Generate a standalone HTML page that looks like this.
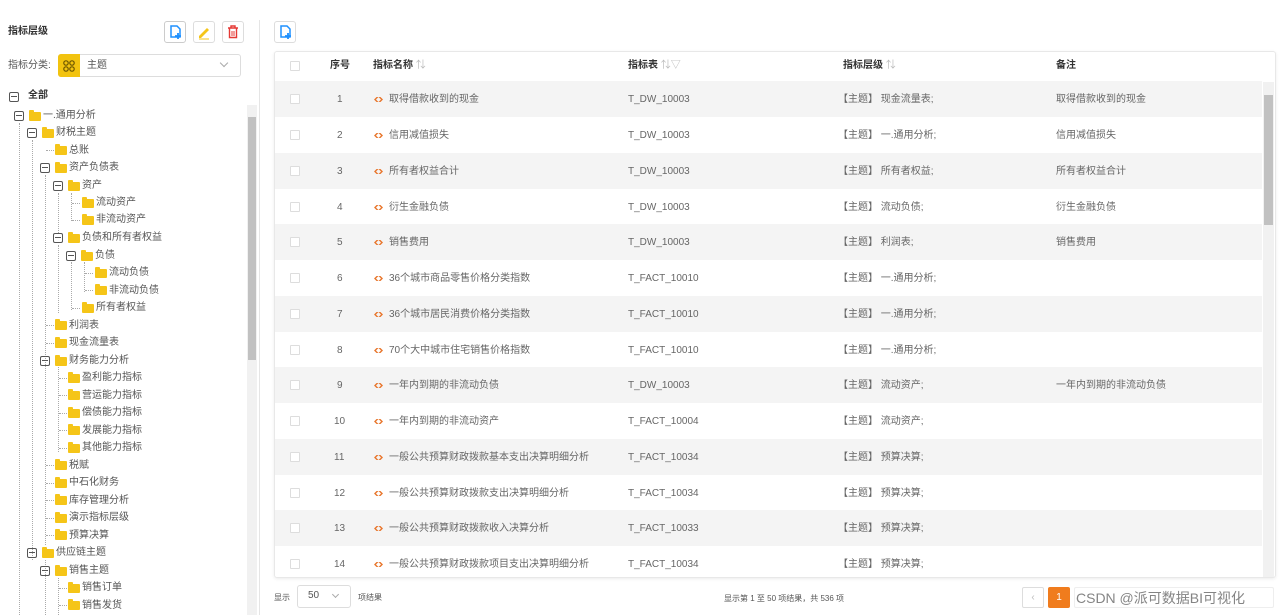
<!DOCTYPE html>
<html><head><meta charset="utf-8"><style>
*{box-sizing:border-box;margin:0;padding:0}
body{width:1280px;height:615px;overflow:hidden;background:#fff;font-family:"Liberation Sans","Noto Sans CJK SC",sans-serif;font-size:10px;line-height:14px;color:#555;position:relative}
.a{position:absolute;white-space:nowrap;line-height:14px}
.btn{position:absolute;width:22px;height:22px;border:1px solid #ddd;border-radius:3px;background:#fff}
.t{position:absolute;white-space:nowrap;font-size:10px;color:#555;line-height:14px}
.tg{position:absolute;width:10px;height:10px;border:1.3px solid #555;border-radius:2px}
.tg:after{content:"";position:absolute;left:1px;right:1px;top:3px;height:1.3px;background:#555}
.fd{position:absolute;width:12px;height:9px;background:#f5c518;border-radius:1px}
.fd:before{content:"";position:absolute;left:0;top:-2px;width:5px;height:3px;background:#f5c518;border-radius:1px 1px 0 0}
.vl{position:absolute;border-left:1px dotted #aaa}
.hl{position:absolute;border-top:1px dotted #aaa;width:8px}
.row{position:absolute;left:275px;width:987px;height:36px}
.row.g{background:#f4f4f4}
.cb{position:absolute;left:15px;top:13px;width:10px;height:10px;border:1px solid #ddd;background:#fff;border-radius:1px}
.c{position:absolute;top:12px;font-size:10px;color:#666;white-space:nowrap;line-height:14px;height:14px}
.ic{position:absolute;left:98px;top:14px;width:11px;height:9px}
</style></head><body>
<div class="a" style="left:8px;top:25px;font-weight:bold;font-size:10px;color:#333">指标层级</div>
<div class="btn" style="left:164px;top:21px;border-color:#ccc"><svg width="20" height="20" viewBox="0 0 20 20"><path d="M6 4h6l3 3v8H6z" fill="none" stroke="#1e90ff" stroke-width="1.5"/><path d="M13 11v6M10 14h6" stroke="#1e90ff" stroke-width="1.8"/></svg></div>
<div class="btn" style="left:193px;top:21px"><svg width="20" height="20" viewBox="0 0 20 20"><path d="M5 14l8-8 2 2-8 8H5z" fill="#f5c518"/><path d="M5 17h10" stroke="#f5c518"/></svg></div>
<div class="btn" style="left:222px;top:21px"><svg width="20" height="20" viewBox="0 0 20 20"><path d="M5 6h10M8 6V4h4v2M6.5 6.5v9h7v-9" fill="none" stroke="#e53935" stroke-width="1.4"/><path d="M9 9v5M11 9v5" stroke="#e53935"/></svg></div>
<div class="a" style="left:8px;top:59px;color:#555">指标分类:</div>
<div class="a" style="left:58px;top:54px;width:183px;height:23px;border:1px solid #ddd;border-radius:3px"></div>
<div class="a" style="left:58px;top:54px;width:22px;height:23px;background:#f2c30f;border-radius:3px 0 0 3px"><svg width="22" height="23"><g fill="none" stroke="#6b5500" stroke-width="1.2"><circle cx="8" cy="9" r="2.2"/><circle cx="14" cy="9" r="2.2"/><circle cx="8" cy="15" r="2.2"/><circle cx="14" cy="15" r="2.2"/></g></svg></div>
<div class="a" style="left:87px;top:59px;color:#555">主题</div>
<div class="a" style="left:221px;top:60px;width:6px;height:6px;border-right:1px solid #aaa;border-bottom:1px solid #aaa;transform:rotate(45deg)"></div>
<div class="a" style="left:259px;top:20px;height:595px;border-left:1px solid #e5e5e5"></div>
<div class="a" style="left:247px;top:105px;width:10px;height:510px;background:#f1f1f1"></div>
<div class="a" style="left:248px;top:117px;width:8px;height:243px;background:#c1c1c1"></div>

<div class="tg" style="left:9px;top:92px"></div><div class="t" style="left:28px;top:89px;font-weight:bold;color:#333">全部</div>
<div class="vl" style="left:19px;top:123px;height:492px"></div>
<div class="vl" style="left:32px;top:140px;height:420px"></div>
<div class="vl" style="left:45px;top:175px;height:370px"></div>
<div class="vl" style="left:58px;top:193px;height:40px"></div>
<div class="vl" style="left:58px;top:245px;height:68px"></div>
<div class="vl" style="left:71px;top:193px;height:28px"></div>
<div class="vl" style="left:71px;top:262px;height:48px"></div>
<div class="vl" style="left:84px;top:262px;height:30px"></div>
<div class="vl" style="left:58px;top:367px;height:85px"></div>
<div class="vl" style="left:45px;top:560px;height:55px"></div>
<div class="vl" style="left:58px;top:578px;height:37px"></div>

<div class="tg" style="left:14px;top:111px"></div><div class="fd" style="left:29px;top:112px"></div><div class="t" style="left:43px;top:109px">一.通用分析</div>
<div class="tg" style="left:27px;top:128px"></div><div class="fd" style="left:42px;top:129px"></div><div class="t" style="left:56px;top:126px">财税主题</div>
<div class="hl" style="left:46px;top:150px"></div><div class="fd" style="left:55px;top:146px"></div><div class="t" style="left:69px;top:144px">总账</div>
<div class="tg" style="left:40px;top:163px"></div><div class="fd" style="left:55px;top:164px"></div><div class="t" style="left:69px;top:161px">资产负债表</div>
<div class="tg" style="left:53px;top:181px"></div><div class="fd" style="left:68px;top:182px"></div><div class="t" style="left:82px;top:179px">资产</div>
<div class="hl" style="left:72px;top:203px"></div><div class="fd" style="left:82px;top:199px"></div><div class="t" style="left:96px;top:196px">流动资产</div>
<div class="hl" style="left:72px;top:220px"></div><div class="fd" style="left:82px;top:216px"></div><div class="t" style="left:96px;top:213px">非流动资产</div>
<div class="tg" style="left:53px;top:233px"></div><div class="fd" style="left:68px;top:234px"></div><div class="t" style="left:82px;top:231px">负债和所有者权益</div>
<div class="tg" style="left:66px;top:251px"></div><div class="fd" style="left:81px;top:252px"></div><div class="t" style="left:95px;top:249px">负债</div>
<div class="hl" style="left:85px;top:273px"></div><div class="fd" style="left:95px;top:269px"></div><div class="t" style="left:109px;top:266px">流动负债</div>
<div class="hl" style="left:85px;top:290px"></div><div class="fd" style="left:95px;top:286px"></div><div class="t" style="left:109px;top:284px">非流动负债</div>
<div class="hl" style="left:72px;top:308px"></div><div class="fd" style="left:82px;top:304px"></div><div class="t" style="left:96px;top:301px">所有者权益</div>
<div class="hl" style="left:46px;top:325px"></div><div class="fd" style="left:55px;top:321px"></div><div class="t" style="left:69px;top:319px">利润表</div>
<div class="hl" style="left:46px;top:343px"></div><div class="fd" style="left:55px;top:339px"></div><div class="t" style="left:69px;top:336px">现金流量表</div>
<div class="tg" style="left:40px;top:356px"></div><div class="fd" style="left:55px;top:357px"></div><div class="t" style="left:69px;top:354px">财务能力分析</div>
<div class="hl" style="left:59px;top:378px"></div><div class="fd" style="left:68px;top:374px"></div><div class="t" style="left:82px;top:371px">盈利能力指标</div>
<div class="hl" style="left:59px;top:395px"></div><div class="fd" style="left:68px;top:391px"></div><div class="t" style="left:82px;top:389px">营运能力指标</div>
<div class="hl" style="left:59px;top:413px"></div><div class="fd" style="left:68px;top:409px"></div><div class="t" style="left:82px;top:406px">偿债能力指标</div>
<div class="hl" style="left:59px;top:430px"></div><div class="fd" style="left:68px;top:426px"></div><div class="t" style="left:82px;top:424px">发展能力指标</div>
<div class="hl" style="left:59px;top:448px"></div><div class="fd" style="left:68px;top:444px"></div><div class="t" style="left:82px;top:441px">其他能力指标</div>
<div class="hl" style="left:46px;top:465px"></div><div class="fd" style="left:55px;top:461px"></div><div class="t" style="left:69px;top:459px">税赋</div>
<div class="hl" style="left:46px;top:483px"></div><div class="fd" style="left:55px;top:479px"></div><div class="t" style="left:69px;top:476px">中石化财务</div>
<div class="hl" style="left:46px;top:500px"></div><div class="fd" style="left:55px;top:496px"></div><div class="t" style="left:69px;top:494px">库存管理分析</div>
<div class="hl" style="left:46px;top:518px"></div><div class="fd" style="left:55px;top:514px"></div><div class="t" style="left:69px;top:511px">演示指标层级</div>
<div class="hl" style="left:46px;top:535px"></div><div class="fd" style="left:55px;top:531px"></div><div class="t" style="left:69px;top:529px">预算决算</div>
<div class="tg" style="left:27px;top:548px"></div><div class="fd" style="left:42px;top:549px"></div><div class="t" style="left:56px;top:546px">供应链主题</div>
<div class="tg" style="left:40px;top:566px"></div><div class="fd" style="left:55px;top:567px"></div><div class="t" style="left:69px;top:564px">销售主题</div>
<div class="hl" style="left:59px;top:588px"></div><div class="fd" style="left:68px;top:584px"></div><div class="t" style="left:82px;top:581px">销售订单</div>
<div class="hl" style="left:59px;top:605px"></div><div class="fd" style="left:68px;top:601px"></div><div class="t" style="left:82px;top:599px">销售发货</div>

<div class="btn" style="left:274px;top:21px"><svg width="20" height="20" viewBox="0 0 20 20"><path d="M6 4h6l3 3v8H6z" fill="none" stroke="#1e90ff" stroke-width="1.5"/><path d="M13 11v6M10 14h6" stroke="#1e90ff" stroke-width="1.8"/></svg></div>
<div class="a" style="left:274px;top:51px;width:1002px;height:527px;border:1px solid #e8e8e8;border-radius:3px;box-shadow:0 1px 3px rgba(0,0,0,.08)"></div>
<div class="a" style="left:290px;top:61px;width:10px;height:10px;border:1px solid #ddd;border-radius:1px"></div>
<div class="a" style="left:330px;top:59px;font-weight:bold;color:#333">序号</div>
<div class="a" style="left:373px;top:59px;font-weight:bold;color:#333">指标名称 <span style="color:#bbb;font-weight:normal">⇅</span></div>
<div class="a" style="left:628px;top:59px;font-weight:bold;color:#333">指标表 <span style="color:#bbb;font-weight:normal">⇅▽</span></div>
<div class="a" style="left:843px;top:59px;font-weight:bold;color:#333">指标层级 <span style="color:#bbb;font-weight:normal">⇅</span></div>
<div class="a" style="left:1056px;top:59px;font-weight:bold;color:#333">备注</div>
<div class="a" style="left:1263px;top:82px;width:11px;height:495px;background:#f1f1f1"></div>
<div class="a" style="left:1264px;top:95px;width:9px;height:130px;background:#c1c1c1"></div>

<svg width="0" height="0" style="position:absolute"><defs><symbol id="lk" viewBox="0 0 11 9"><path d="M1 4.5L3.5 2h2L3 4.5 5.5 7h-2zM10 4.5L7.5 2h-2L8 4.5 5.5 7h2z" fill="#e8772e"/></symbol></defs></svg>

<div class="row g" style="top:81px"><div class="cb"></div><div class="c" style="left:62px">1</div><svg class="ic"><use href="#lk"/></svg><div class="c" style="left:114px">取得借款收到的现金</div><div class="c" style="left:353px">T_DW_10003</div><div class="c" style="left:563px">【主题】 现金流量表;</div><div class="c" style="left:781px">取得借款收到的现金</div></div>
<div class="row" style="top:117px"><div class="cb"></div><div class="c" style="left:62px">2</div><svg class="ic"><use href="#lk"/></svg><div class="c" style="left:114px">信用减值损失</div><div class="c" style="left:353px">T_DW_10003</div><div class="c" style="left:563px">【主题】 一.通用分析;</div><div class="c" style="left:781px">信用减值损失</div></div>
<div class="row g" style="top:153px"><div class="cb"></div><div class="c" style="left:62px">3</div><svg class="ic"><use href="#lk"/></svg><div class="c" style="left:114px">所有者权益合计</div><div class="c" style="left:353px">T_DW_10003</div><div class="c" style="left:563px">【主题】 所有者权益;</div><div class="c" style="left:781px">所有者权益合计</div></div>
<div class="row" style="top:189px"><div class="cb"></div><div class="c" style="left:62px">4</div><svg class="ic"><use href="#lk"/></svg><div class="c" style="left:114px">衍生金融负债</div><div class="c" style="left:353px">T_DW_10003</div><div class="c" style="left:563px">【主题】 流动负债;</div><div class="c" style="left:781px">衍生金融负债</div></div>
<div class="row g" style="top:224px"><div class="cb"></div><div class="c" style="left:62px">5</div><svg class="ic"><use href="#lk"/></svg><div class="c" style="left:114px">销售费用</div><div class="c" style="left:353px">T_DW_10003</div><div class="c" style="left:563px">【主题】 利润表;</div><div class="c" style="left:781px">销售费用</div></div>
<div class="row" style="top:260px"><div class="cb"></div><div class="c" style="left:62px">6</div><svg class="ic"><use href="#lk"/></svg><div class="c" style="left:114px">36个城市商品零售价格分类指数</div><div class="c" style="left:353px">T_FACT_10010</div><div class="c" style="left:563px">【主题】 一.通用分析;</div></div>
<div class="row g" style="top:296px"><div class="cb"></div><div class="c" style="left:62px">7</div><svg class="ic"><use href="#lk"/></svg><div class="c" style="left:114px">36个城市居民消费价格分类指数</div><div class="c" style="left:353px">T_FACT_10010</div><div class="c" style="left:563px">【主题】 一.通用分析;</div></div>
<div class="row" style="top:332px"><div class="cb"></div><div class="c" style="left:62px">8</div><svg class="ic"><use href="#lk"/></svg><div class="c" style="left:114px">70个大中城市住宅销售价格指数</div><div class="c" style="left:353px">T_FACT_10010</div><div class="c" style="left:563px">【主题】 一.通用分析;</div></div>
<div class="row g" style="top:367px"><div class="cb"></div><div class="c" style="left:62px">9</div><svg class="ic"><use href="#lk"/></svg><div class="c" style="left:114px">一年内到期的非流动负债</div><div class="c" style="left:353px">T_DW_10003</div><div class="c" style="left:563px">【主题】 流动资产;</div><div class="c" style="left:781px">一年内到期的非流动负债</div></div>
<div class="row" style="top:403px"><div class="cb"></div><div class="c" style="left:59px">10</div><svg class="ic"><use href="#lk"/></svg><div class="c" style="left:114px">一年内到期的非流动资产</div><div class="c" style="left:353px">T_FACT_10004</div><div class="c" style="left:563px">【主题】 流动资产;</div></div>
<div class="row g" style="top:439px"><div class="cb"></div><div class="c" style="left:59px">11</div><svg class="ic"><use href="#lk"/></svg><div class="c" style="left:114px">一般公共预算财政拨款基本支出决算明细分析</div><div class="c" style="left:353px">T_FACT_10034</div><div class="c" style="left:563px">【主题】 预算决算;</div></div>
<div class="row" style="top:475px"><div class="cb"></div><div class="c" style="left:59px">12</div><svg class="ic"><use href="#lk"/></svg><div class="c" style="left:114px">一般公共预算财政拨款支出决算明细分析</div><div class="c" style="left:353px">T_FACT_10034</div><div class="c" style="left:563px">【主题】 预算决算;</div></div>
<div class="row g" style="top:510px"><div class="cb"></div><div class="c" style="left:59px">13</div><svg class="ic"><use href="#lk"/></svg><div class="c" style="left:114px">一般公共预算财政拨款收入决算分析</div><div class="c" style="left:353px">T_FACT_10033</div><div class="c" style="left:563px">【主题】 预算决算;</div></div>
<div class="row" style="top:546px;height:31px"><div class="cb"></div><div class="c" style="left:59px">14</div><svg class="ic"><use href="#lk"/></svg><div class="c" style="left:114px">一般公共预算财政拨款项目支出决算明细分析</div><div class="c" style="left:353px">T_FACT_10034</div><div class="c" style="left:563px">【主题】 预算决算;</div></div>

<div class="a" style="left:274px;top:591px;font-size:8px;color:#555">显示</div>
<div class="a" style="left:297px;top:585px;width:54px;height:23px;border:1px solid #ddd;border-radius:3px"></div>
<div class="a" style="left:308px;top:589px;color:#555">50</div>
<div class="a" style="left:333px;top:592px;width:5px;height:5px;border-right:1px solid #aaa;border-bottom:1px solid #aaa;transform:rotate(45deg)"></div>
<div class="a" style="left:358px;top:591px;font-size:8px;color:#555">项结果</div>
<div class="a" style="left:724px;top:592px;font-size:8px;color:#555">显示第 1 至 50 项结果，共 536 项</div>
<div class="a" style="left:1022px;top:587px;width:22px;height:21px;border:1px solid #ddd;border-radius:2px;color:#bbb;text-align:center;line-height:19px">‹</div>
<div class="a" style="left:1048px;top:587px;width:22px;height:21px;background:#f07c1d;border-radius:2px;color:#fff;text-align:center;line-height:21px">1</div>
<div class="a" style="left:1074px;top:587px;width:200px;height:21px;border:1px solid #eee;border-radius:2px"></div>
<div class="a" style="left:1076px;top:590px;font-size:14px;line-height:16px;color:#666;opacity:.8">CSDN @派可数据BI可视化</div>
</body></html>
